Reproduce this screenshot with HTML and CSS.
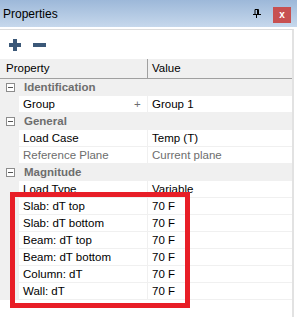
FILE: index.html
```html
<!DOCTYPE html>
<html>
<head>
<meta charset="utf-8">
<link rel="stylesheet" href="styles.css">
</head>
<body>
<div class="titlebar">
  <span class="title">Properties</span>
  <span class="pin"><svg width="8" height="9" viewBox="0 0 8 9"><path d="M2 0.5H5.5V5M2 0.5V5M4.5 0.5V5" fill="none" stroke="#000" stroke-width="1"/><path d="M0 5.5H8" stroke="#000" stroke-width="1"/><path d="M3.5 5.5V9" stroke="#000" stroke-width="1"/></svg></span>
  <span class="close">x</span>
</div>
<div class="panel">
  <div class="toolbar">
    <svg class="tb-icon" width="12" height="12" viewBox="0 0 12 12"><path d="M4 0H8V4H12V8H8V12H4V8H0V4H4Z" fill="#3b5878"/></svg>
    <svg class="tb-icon" width="13" height="4" viewBox="0 0 13 4"><rect width="13" height="4" fill="#3b5878"/></svg>
  </div>
  <div class="grid">
    <div class="header">
      <div class="hcell hprop">Property</div>
      <div class="hcell hval">Value</div>
    </div>
    <div class="cat"><span class="box"></span><span class="catname">Identification</span></div>
    <div class="row"><div class="prop">Group<span class="plus">+</span></div><div class="val">Group 1</div></div>
    <div class="cat"><span class="box"></span><span class="catname">General</span></div>
    <div class="row"><div class="prop">Load Case</div><div class="val">Temp (T)</div></div>
    <div class="row dim"><div class="prop">Reference Plane</div><div class="val">Current plane</div></div>
    <div class="cat"><span class="box"></span><span class="catname">Magnitude</span></div>
    <div class="row"><div class="prop">Load Type</div><div class="val">Variable</div></div>
    <div class="row"><div class="prop">Slab: dT top</div><div class="val">70 F</div></div>
    <div class="row"><div class="prop">Slab: dT bottom</div><div class="val">70 F</div></div>
    <div class="row"><div class="prop">Beam: dT top</div><div class="val">70 F</div></div>
    <div class="row"><div class="prop">Beam: dT bottom</div><div class="val">70 F</div></div>
    <div class="row"><div class="prop">Column: dT</div><div class="val">70 F</div></div>
    <div class="row"><div class="prop">Wall: dT</div><div class="val">70 F</div></div>
  </div>
</div>
<div class="highlight"></div>
</body>
</html>
```
FILE: styles.css
```css
html, body {
  margin: 0;
  padding: 0;
  background: #fff;
}
body {
  width: 297px;
  height: 317px;
  overflow: hidden;
  position: relative;
  font-family: "Liberation Sans", Arial, sans-serif;
  font-size: 11.5px;
  color: #000;
}
.titlebar {
  height: 27px;
  background: linear-gradient(#9db8d9, #c6d8ec);
  display: flex;
  align-items: center;
  padding-left: 3px;
  box-sizing: border-box;
}
.title {
  font-size: 12px;
  color: #000;
  flex: 1;
  margin-top: 1px;
}
.pin {
  width: 8px;
  height: 9px;
  display: flex;
  margin-right: 12px;
  margin-top: -1px;
}
.close {
  width: 18px;
  height: 16px;
  background: #c75050;
  color: #fff;
  font-weight: bold;
  font-size: 10px;
  display: flex;
  align-items: center;
  justify-content: center;
  margin-right: 6px;
  margin-top: 3px;
  line-height: 1;
}
.panel {
  margin-top: 2px;
  width: 292px;
  border-top: 1px solid #dcdcdc;
  border-right: 2px solid #e2e2e2;
  height: 287px;
}
.toolbar {
  height: 29px;
  display: flex;
  align-items: center;
  padding-left: 9px;
  gap: 12px;
  box-sizing: border-box;
  padding-top: 1px;
}
.header {
  height: 20px;
  background: #f0f0f0;
  border-bottom: 1px solid #a0a0a0;
  display: flex;
  box-sizing: border-box;
}
.hcell {
  line-height: 19px;
}
.hprop {
  width: 148px;
  padding-left: 6px;
  box-sizing: border-box;
  border-right: 1px solid #a0a0a0;
}
.hval {
  padding-left: 4px;
}
.grid .cat, .grid .row {
  height: 17px;
  box-sizing: border-box;
  border-bottom: 1px solid #f0f0f0;
  background: #f0f0f0;
}
.cat {
  display: flex;
  align-items: center;
}
.box {
  width: 9px;
  height: 9px;
  box-sizing: border-box;
  border: 1px solid #8c8c8c;
  margin-left: 6px;
  position: relative;
  background: #fff;
}
.box::after {
  content: "";
  position: absolute;
  left: 1px;
  top: 3px;
  width: 5px;
  height: 1px;
  background: #555;
}
.catname {
  font-weight: bold;
  color: #6d6d6d;
  margin-left: 9px;
  line-height: 16px;
}
.row {
  display: grid;
  grid-template-columns: 128px 1fr;
  column-gap: 1px;
  padding-left: 19px;
}
.prop, .val {
  background: #fff;
  line-height: 16px;
  height: 16px;
  white-space: nowrap;
  position: relative;
}
.prop {
  padding-left: 4px;
}
.val {
  padding-left: 4px;
}
.dim .prop, .dim .val {
  color: #6d6d6d;
}
.plus {
  position: absolute;
  left: 115px;
  top: 0;
  color: #6d6d6d;
}
.highlight {
  position: absolute;
  left: 10px;
  top: 192px;
  width: 180px;
  height: 116px;
  box-sizing: border-box;
  border: 5px solid #e81e27;
}
```
